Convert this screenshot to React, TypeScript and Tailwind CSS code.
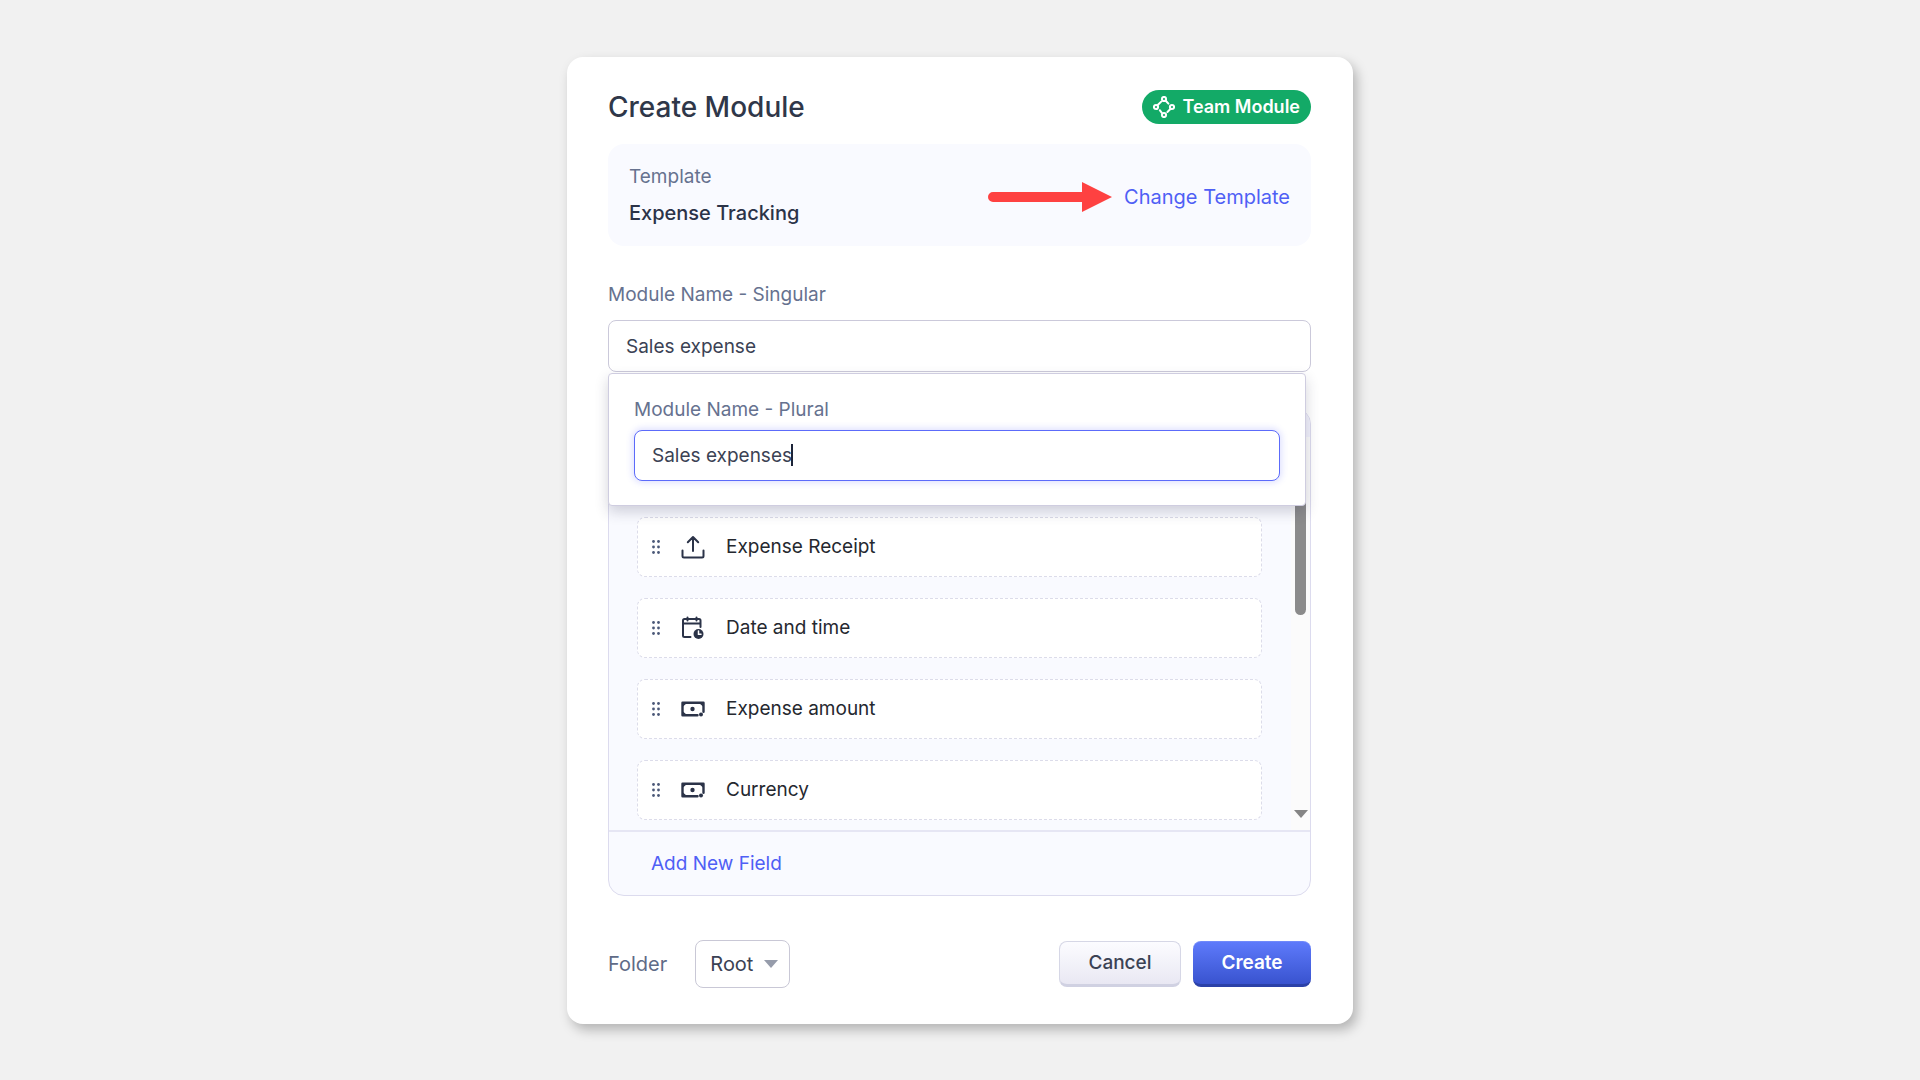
import React, { useState } from "react";

const INK = "#2b3348";

const fields = [
  { label: "Expense Receipt", icon: "upload" },
  { label: "Date and time", icon: "date" },
  { label: "Expense amount", icon: "money" },
  { label: "Currency", icon: "money" },
];

const TeamIcon = () => (
  <svg width="22" height="22" viewBox="0 0 22 22" fill="none" stroke="#fff" strokeWidth="2" strokeLinecap="round" aria-hidden="true">
    <circle cx="11" cy="3" r="2.1" />
    <circle cx="19" cy="11" r="2.1" />
    <circle cx="11" cy="19" r="2.1" />
    <circle cx="3" cy="11" r="2.1" />
    <path d="M13 5l2.4 2.6M17.4 13l-3 3M8.6 16.6L6.8 14.2M5 8.8l3.2-3.2" />
  </svg>
);

const UploadIcon = () => (
  <svg width="24" height="24" viewBox="0 0 24 24" fill="none" stroke={INK} strokeWidth="2" strokeLinecap="round" strokeLinejoin="round" aria-hidden="true">
    <path d="M12 16V2.200M6.800 7.200L12 2l5.200 5.200M1.500 15.500V21a1.500 1.500 0 0 0 1.500 1.500h18a1.500 1.500 0 0 0 1.500-1.500v-5.500" />
  </svg>
);

const DateIcon = () => (
  <svg width="24" height="24" viewBox="0 0 24 24" fill="none" stroke={INK} strokeWidth="2" strokeLinecap="round" aria-hidden="true">
    <path d="M9.500 21H3.500a1.500 1.500 0 0 1-1.500-1.500V4.500A1.500 1.500 0 0 1 3.500 3h14.500A1.500 1.500 0 0 1 19.500 4.500V11M2 7.500h17.500M6.500 1.500v3M15.500 1.500v3" />
    <circle cx="17.500" cy="18" r="5" fill={INK} stroke="none" />
    <path d="M17.500 15v3.200h2.500" stroke="#fff" strokeWidth="1.500" />
  </svg>
);

const MoneyIcon = () => (
  <svg width="24" height="24" viewBox="0 0 24 24" fill="none" aria-hidden="true">
    <path d="M16.500 18.200H1.500V5.800h21v9" stroke={INK} strokeWidth="2.400" strokeLinecap="round" strokeLinejoin="round" />
    <path d="M2 6h4L2 9.500zM22 6h-4l4 3.500zM2 18h4l-4-3.500z" fill={INK} />
    <circle cx="11.500" cy="12" r="2.200" fill={INK} />
    <circle cx="20" cy="17.500" r="2" fill={INK} />
  </svg>
);

const DragHandle = () => (
  <svg width="8" height="14" viewBox="0 0 8 14" fill="#4b5878" aria-hidden="true">
    {[1.5, 7, 12.5].map((y) => (
      <React.Fragment key={y}>
        <circle cx="1.500" cy={y} r="1.400" />
        <circle cx="6.500" cy={y} r="1.400" />
      </React.Fragment>
    ))}
  </svg>
);

const FieldIcon = ({ name }: { name: string }) => {
  if (name === "upload") return <UploadIcon />;
  if (name === "date") return <DateIcon />;
  return <MoneyIcon />;
};

const PluralPopup = () => {
  const [plural, setPlural] = useState("Sales expenses");
  return (
    <div className="absolute left-0 right-[5px] top-full mt-px z-10 rounded-[4px] border border-[#cfcde0] bg-white px-[25px] pt-6 pb-6 shadow-[0_6px_14px_rgba(40,40,70,0.2)]">
      <label htmlFor="plural" className="block leading-6 text-[#66728f]">Module Name - Plural</label>
      <div className="relative mt-2">
        <input
          id="plural"
          value={plural}
          onChange={(e) => setPlural(e.target.value)}
          className="block h-[51px] w-full rounded-lg border border-[#5c6bfa] bg-white px-[17px] text-[#3b4254] caret-transparent outline-none shadow-[0_0_6px_2px_rgba(100,110,255,0.2)]"
        />
        <span className="absolute left-[157px] top-[14px] h-[22px] w-[2px] bg-[#1c2438]" />
      </div>
    </div>
  );
};

const FieldPanel = () => (
  <section className="mt-9 overflow-hidden rounded-2xl border border-[#dcdbee] bg-[#f9faff]">
    <div className="h-7 bg-[#f2f2fc]" />
    <div className="flex">
      <ul className="flex flex-1 flex-col gap-[21px] pt-20 pb-[10px] pl-7 pr-[29px]">
        {fields.map((f) => (
          <li key={f.label} className="flex h-[60px] items-center rounded-lg border border-dashed border-[#dcdcea] bg-white pl-[14px]">
            <DragHandle />
            <span className="ml-[21px] mr-[21px]"><FieldIcon name={f.icon} /></span>
            <span className="text-[#25282f]">{f.label}</span>
          </li>
        ))}
      </ul>
      <div className="flex w-[19px] flex-col items-center justify-between bg-[#fbfbfb] pb-3">
        <div className="h-[178px] w-[11px] rounded-full bg-[#8b8b8b]" />
        <svg width="14" height="8" viewBox="0 0 14 8" fill="#858585" aria-hidden="true"><path d="M0 0h14L7 8z" /></svg>
      </div>
    </div>
    <div className="flex h-[65px] items-center border-t-2 border-[#e6e6f4] pl-[42px]">
      <button type="button" className="text-[#4f5ff5]">Add New Field</button>
    </div>
  </section>
);

export default function App() {
  const [singular, setSingular] = useState("Sales expense");

  return (
    <main className="min-h-screen bg-[#f1f1f1] px-4 pt-[57px] pb-14 font-['Inter',sans-serif] text-[19px] leading-6">
      <form
        onSubmit={(e) => e.preventDefault()}
        className="mx-auto w-full max-w-[786px] rounded-2xl bg-white pl-[41px] pr-[42px] pt-8 pb-9 shadow-[4px_6px_12px_rgba(0,0,0,0.25)]"
      >
        <header className="flex h-9 items-center justify-between">
          <h1 className="text-[28px] leading-9 font-medium text-[#2f3749]">Create Module</h1>
          <span className="flex h-[34px] items-center gap-[7px] rounded-full bg-[#13aa67] px-[11px] text-[18px] font-semibold text-white">
            <TeamIcon />
            Team Module
          </span>
        </header>

        <section className="mt-[19px] flex h-[102px] items-center rounded-2xl bg-[#f9faff] px-[21px]">
          <div className="flex flex-1 flex-col gap-3">
            <span className="text-[#66728f]">Template</span>
            <span className="text-[20px] font-medium text-[#2b3348]">Expense Tracking</span>
          </div>
          <div className="flex items-center gap-3 pt-[3px]">
            <svg width="124" height="30" viewBox="0 0 124 30" fill="#fe4141" aria-hidden="true">
              <path d="M5 10h89V0l30 15-30 15V20H5a5 5 0 0 1 0-10z" />
            </svg>
            <button type="button" className="text-[20px] text-[#4f5ff5]">Change Template</button>
          </div>
        </section>

        <label htmlFor="singular" className="mt-[37px] block text-[#66728f]">Module Name - Singular</label>
        <div className="relative mt-[13px]">
          <input
            id="singular"
            value={singular}
            onChange={(e) => setSingular(e.target.value)}
            className="block h-[52px] w-full rounded-lg border border-[#cbc9da] bg-white px-[17px] text-[#3b4254] outline-none"
          />
          <PluralPopup />
        </div>

        <FieldPanel />

        <footer className="mt-11 flex items-center">
          <label htmlFor="folder" className="text-[20px] text-[#5f6b87]">Folder</label>
          <div className="relative ml-7">
            <select id="folder" className="block h-12 w-[95px] appearance-none rounded-lg border border-[#c9c8d6] bg-white pl-[14px] text-[20px] text-[#3b4254] outline-none">
              <option>Root</option>
            </select>
            <svg width="14" height="8" viewBox="0 0 14 8" fill="#969cab" className="pointer-events-none absolute right-3 top-5" aria-hidden="true"><path d="M0 0h14L7 8z" /></svg>
          </div>
          <div className="ml-auto flex gap-3">
            <button type="button" className="h-[46px] w-[122px] rounded-lg border border-b-[3px] border-[#d6d7e6] border-b-[#d0d1e2] bg-gradient-to-b from-[#fcfcff] to-[#e9e8f3] font-medium text-[#3b4254]">Cancel</button>
            <button type="submit" className="h-[46px] w-[118px] rounded-lg border-t border-b-[3px] border-t-[#7089fa] border-b-[#2b41a8] bg-gradient-to-b from-[#5e7afb] to-[#3953cf] font-semibold text-white">Create</button>
          </div>
        </footer>
      </form>
    </main>
  );
}
